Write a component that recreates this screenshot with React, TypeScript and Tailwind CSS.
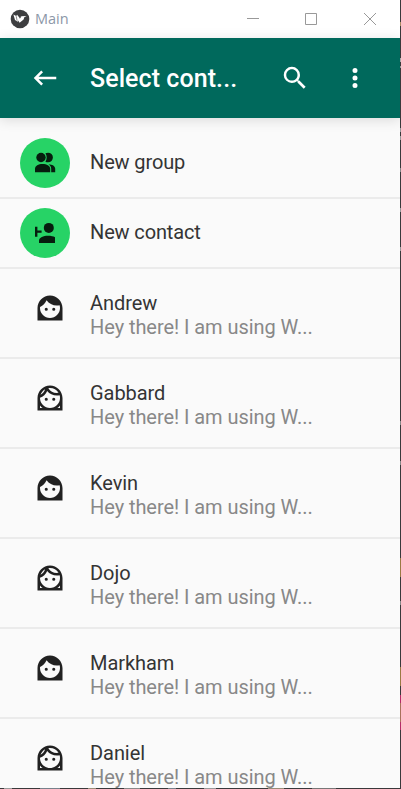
import React from "react";

const messages = "Hey there! I am using W...";

const contacts = [
  { name: "Andrew", filled: true },
  { name: "Gabbard", filled: false },
  { name: "Kevin", filled: true },
  { name: "Dojo", filled: false },
  { name: "Markham", filled: true },
  { name: "Daniel", filled: false },
];

function Icon({ d }: { d: string }) {
  return (
    <svg viewBox="0 0 24 24" className="size-[30px] shrink-0" fill="currentColor" fillRule="evenodd">
      <path d={d} />
    </svg>
  );
}

const eyes =
  "M13.75 13a1.25 1.25 0 1 0 2.5 0a1.25 1.25 0 1 0-2.5 0ZM7.75 13a1.25 1.25 0 1 0 2.5 0a1.25 1.25 0 1 0-2.5 0Z";
const face =
  "M22 12V22H2V12C2 6.5 6.5 2 12 2S22 6.5 22 12ZM4 12C4 16.41 7.59 20 12 20S20 16.41 20 12C20 11.21 19.88 10.45 19.67 9.74C18.95 9.91 18.2 10 17.42 10C14.05 10 11.07 8.33 9.26 5.77C8.28 8.16 6.41 10.09 4.05 11.14C4 11.42 4 11.71 4 12Z";
const faceOutline =
  "M22 12V22H2V12C2 6.5 6.5 2 12 2S22 6.5 22 12ZM4 12C4 16.41 7.59 20 12 20S20 16.41 20 12C20 11.22 19.88 10.47 19.67 9.76C18.97 9.91 18.25 10 17.5 10C14.37 10 11.58 8.56 9.74 6.31C8.69 8.87 6.6 10.88 4 11.86C4 11.9 4 11.95 4 12ZM10.66 4.12C12.06 6.44 14.6 8 17.5 8C17.96 8 18.41 7.95 18.84 7.88C17.44 5.56 14.9 4 12 4C11.54 4 11.09 4.05 10.66 4.12ZM4.42 9.47C6.19 8.46 7.5 6.84 8.08 4.91C6.37 5.92 5.05 7.54 4.42 9.47ZM4 18V20H6.1C5.3 19.5 4.6 18.8 4 18ZM20 18C19.4 18.8 18.7 19.5 17.9 20H20Z";

function GroupIcon() {
  return (
    <svg viewBox="0 0 50 50" className="size-[50px] shrink-0 rounded-full bg-[#27d366]" fill="#061d0e">
      <circle cx="21" cy="19.5" r="4.7" />
      <path d="M25.4 15.300c.8-.4 1.700-.6 2.700-.6a4.800 4.800 0 0 1 0 9.600c-1 0-1.900-.2-2.700-.6 1.700-2.400 1.700-6 0-8.400Z" />
      <path d="M15 34.300v-3.500c0-3 3.400-4.700 7.500-4.700s7.700 1.700 7.700 4.700v3.500Z" />
      <path d="M28.600 26.200c3.800.2 6.600 1.800 6.600 4.600v3.500h-4v-3.500c0-1.900-1-3.500-2.600-4.600Z" />
    </svg>
  );
}

function AddIcon() {
  return (
    <svg viewBox="0 0 50 50" className="size-[50px] shrink-0 rounded-full bg-[#27d366]" fill="#061d0e">
      <circle cx="28.8" cy="19.9" r="5" />
      <path d="M15 18.7h2.4v3.8h4.2v2.3h-4.2v3.9H15Z" />
      <path d="M19 35v-2.3c0-3.3 4.5-5 9-5 3 0 5.4.5 7 1.5V35Z" />
    </svg>
  );
}

function Action({ label, children }: { label: string; children: React.ReactNode }) {
  return (
    <div className="flex h-[70px] items-center gap-5 border-b-2 border-[#ebebeb] pl-5">
      {children}
      <span className="pb-[2px] text-xl tracking-[-0.13px] text-[#343434]">{label}</span>
    </div>
  );
}

export default function App() {
  return (
    <div className="flex h-[789px] w-[401px] flex-col overflow-hidden bg-[#39393b] font-['Roboto',sans-serif]">
      <div className="flex min-h-0 flex-1">
        <main className="flex w-[400px] flex-col overflow-hidden bg-[#fafafa]">
          <div className="flex h-[38px] shrink-0 items-center bg-white pl-[10px] text-[#999]">
            <svg viewBox="0 0 20 20" className="size-5">
              <circle cx="10" cy="10" r="9.3" fill="#3d3e40" />
              <path d="m3.400 5.600 2.800 1.400.9-1.300 2.800 3.600L11 7.2l5.600-.3-2.300 1.400-.7 2.300-4 3.200-1.500-2.300-.4 1.200-2.700-1.700Z" fill="white" />
              <path d="m6.2 7.2.9 4.500M11 7.2l-1.100 2.200" stroke="#3d3e40" strokeWidth=".6" />
            </svg>
            <span className="ml-[5px] flex-1 font-['Open_Sans',sans-serif] text-[14.5px] text-[#8c97a8]">Main</span>
            <svg viewBox="0 0 134 14" className="mr-[22px] h-[14px] w-[134px]" fill="none" stroke="#999">
              <path d="M3 6.5h12M61.5 1.500h11v11h-11ZM120 1l12 12M132 1l-12 12" />
            </svg>
          </div>
          <header className="flex h-20 shrink-0 items-center bg-[#00695c] pl-[30px] text-white shadow-[0_2px_12px_rgba(0,0,0,0.13)]">
            <Icon d="M21 11H6.83L10.41 7.41L9 6L3 12L9 18L10.41 16.58L6.83 13H21V11Z" />
            <h1 className="ml-[30px] w-[190px] pt-[2px] text-[25px] leading-[30px] font-medium tracking-[0.07px]">Select cont...</h1>
            <Icon d="M9.5 3A6.5 6.5 0 0 1 16 9.5C16 11.11 15.41 12.59 14.44 13.73L14.71 14H15.5L20.5 19L19 20.5L14 15.5V14.71L13.73 14.44C12.59 15.41 11.11 16 9.5 16A6.5 6.5 0 0 1 9.5 3M9.5 5C7 5 5 7 5 9.5S7 14 9.5 14 14 12 14 9.5 12 5 9.5 5Z" />
            <span className="ml-[30px] flex">
              <Icon d="M12 16a2 2 0 1 1 0 4 2 2 0 0 1 0-4m0-6a2 2 0 1 1 0 4 2 2 0 0 1 0-4m0-6a2 2 0 1 1 0 4 2 2 0 0 1 0-4" />
            </span>
          </header>
          <div className="pt-[11px]">
            <Action label="New group"><GroupIcon /></Action>
            <Action label="New contact"><AddIcon /></Action>
            {contacts.map(({ name, filled }) => (
              <div key={name} className="flex h-[90px] border-b-2 border-[#ebebeb] pt-[22px] pl-[35px] text-[#212121]">
                <div className="pt-[2px]">
                  <Icon d={(filled ? face : faceOutline) + eyes} />
                </div>
                <div className="ml-[25px] text-xl leading-6 tracking-[-0.06px]">
                  <div className="text-[#343434]">{name}</div>
                  <div className="text-[#888]">{messages}</div>
                </div>
              </div>
            ))}
          </div>
        </main>
        <div className="flex w-px flex-col">
          <div className="mt-[22px] h-1 bg-[#a98a62]" />
          <div className="mt-8 h-1 bg-[#aaa]" />
          <div className="mt-1 h-0.5 bg-[#999]" />
          <div className="mt-[60px] h-1 bg-[#999]" />
          <div className="mt-1 h-1 bg-[#999]" />
          <div className="mt-7 h-1 bg-[#888]" />
          <div className="mt-9 h-1 bg-[#999]" />
          <div className="mt-[35px] h-1 bg-[#999]" />
          <div className="mt-[170px] h-1 bg-[#888]" />
          <div className="mt-9 h-1 bg-[#888]" />
          <div className="mt-[93px] h-[19px] bg-[#9b7943]" />
          <div className="mt-6 h-1 bg-[#888]" />
          <div className="mt-[62px] h-[19px] bg-[#9b7943]" />
          <div className="mt-[9px] h-2 bg-[#b52b67]" />
          <div className="h-[19px] bg-[#a8715b]" />
          <div className="h-2 bg-[#b52b67]" />
        </div>
      </div>
      <div className="flex h-px gap-7 pl-1">
        <div className="w-2 bg-[#999]" />
        <div className="w-5 bg-[#77818b]" />
        <div className="w-2 bg-[#9a8c77]" />
        <div className="w-4 bg-[#888]" />
        <div className="w-2 bg-[#77818b]" />
        <div className="w-3 bg-[#999]" />
        <div className="ml-6 w-4 bg-[#9a8c77]" />
        <div className="w-6 bg-[#777]" />
      </div>
    </div>
  );
}
